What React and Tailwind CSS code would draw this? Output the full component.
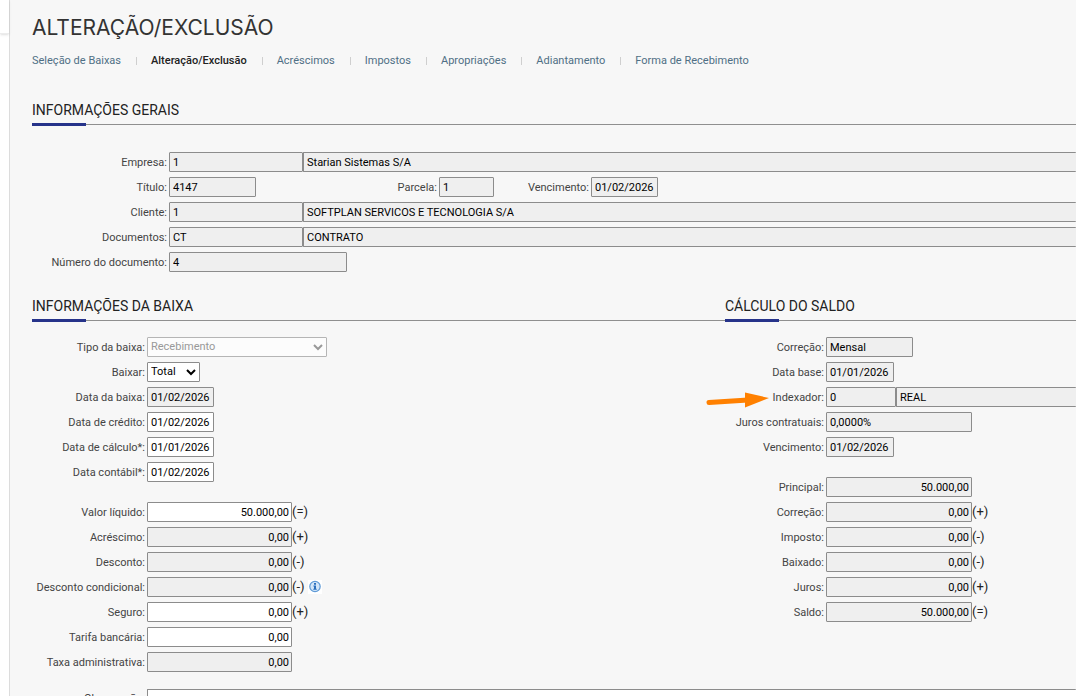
const TABS = [
  "Seleção de Baixas",
  "Alteração/Exclusão",
  "Acréscimos",
  "Impostos",
  "Apropriações",
  "Adiantamento",
  "Forma de Recebimento",
];

function SectionTitle({ children, className = "" }) {
  return (
    <div className={`flex flex-col border-b border-[#8f8f8f] ${className}`}>
      <h2 className="mb-[3px] text-sm leading-5 text-[#222]">{children}</h2>
      <div className="-mb-[2px] h-[3px] w-[54px] bg-[#26338a]" />
    </div>
  );
}

function Label({ htmlFor, className = "", children }) {
  return (
    <label htmlFor={htmlFor} className={`shrink-0 pt-[2px] pr-[2px] text-right text-[11px] text-[#444] ${className}`}>
      {children}:
    </label>
  );
}

function Box({ id, value, className = "", editable = false, numeric = false, label }) {
  return (
    <input
      id={id}
      type="text"
      aria-label={label}
      defaultValue={value}
      readOnly={!editable}
      className={`h-5 rounded-[1px] border border-[#8c8c8c] pl-[3px] text-[11px] text-black outline-none ${
        editable ? "bg-white" : "bg-[#efefef]"
      } ${numeric ? "shrink-0 pr-[2px] text-right" : ""} ${className}`}
    />
  );
}

function Chevron({ className }) {
  return (
    <svg
      viewBox="0 0 10 7"
      className={`pointer-events-none absolute top-[7px] h-[7px] w-[10px] ${className}`}
      fill="none"
      stroke="currentColor"
      strokeWidth="2"
    >
      <path d="M1 1l4 4 4-4" />
    </svg>
  );
}

function InfoIcon() {
  return (
    <svg viewBox="0 0 14 14" className="ml-[3px] size-[14px] bg-white" aria-label="Informação">
      <circle cx="7" cy="6.500" r="5.200" fill="#d3e6f8" stroke="#5f9ad6" strokeWidth="1.200" />
      <path d="M6 3h2v1.700H6zM5.400 5.600H8v3.200h.7v1H5.300v-1H6V6.500h-.6z" fill="#2a6fbd" />
    </svg>
  );
}

function Row({ children }) {
  return <div className="flex h-5 items-center">{children}</div>;
}

function Sign({ children }) {
  return <span className="text-[13px] text-[#222]">{children}</span>;
}

const VALUES = [
  ["liquido", "Valor líquido", "50.000,00", "(=)", true],
  ["acrescimo", "Acréscimo", "0,00", "(+)", false],
  ["desconto", "Desconto", "0,00", "(-)", false],
  ["condicional", "Desconto condicional", "0,00", "(-)", false],
  ["seguro", "Seguro", "0,00", "(+)", true],
  ["tarifa", "Tarifa bancária", "0,00", "", true],
  ["taxa", "Taxa administrativa", "0,00", "", false],
];

const DATES = [
  ["data-baixa", "Data da baixa", "01/02/2026", false],
  ["data-credito", "Data de crédito", "01/02/2026", true],
  ["data-calculo", "Data de cálculo*", "01/01/2026", true],
  ["data-contabil", "Data contábil*", "01/02/2026", true],
];

const BALANCE = [
  ["principal", "Principal", "50.000,00", ""],
  ["correcao-valor", "Correção", "0,00", "(+)"],
  ["imposto", "Imposto", "0,00", "(-)"],
  ["baixado", "Baixado", "0,00", "(-)"],
  ["juros", "Juros", "0,00", "(+)"],
  ["saldo", "Saldo", "50.000,00", "(=)"],
];

export default function App() {
  return (
    <div className="flex h-screen overflow-hidden bg-[#f7f7f7] font-['Roboto',sans-serif]">
      <aside className="w-[10px] shrink-0 border-r border-[#dcdcdc] bg-white">
        <div className="h-[34px] border-b border-[#ececec] shadow-sm" />
      </aside>
      <main className="min-w-0 flex-1 pl-[22px]">
        <h1 className="mt-[14px] font-['Inter',sans-serif] text-[21px] leading-7 text-[#333]">ALTERAÇÃO/EXCLUSÃO</h1>
        <nav className="mt-[11px] flex items-center text-[11px] leading-4">
          {TABS.map((tab, i) => (
            <div key={tab} className="flex items-center">
              {i > 0 && <span className="mr-[14px] ml-[15px] h-2 w-px bg-[#cfcfcf]" />}
              <a href="#" className={i === 1 ? "font-medium text-[#222]" : "text-[#4f6f85]"}>
                {tab}
              </a>
            </div>
          ))}
        </nav>

        <SectionTitle className="mt-[31px]">INFORMAÇÕES GERAIS</SectionTitle>
        <div className="mt-[27px] flex flex-col gap-[5px]">
          <Row>
            <Label htmlFor="empresa" className="w-[137px]">Empresa</Label>
            <Box id="empresa" value="1" className="w-[134px] shrink-0" />
            <Box label="Nome da empresa" value="Starian Sistemas S/A" className="min-w-0 flex-1 border-r-0" />
          </Row>
          <Row>
            <Label htmlFor="titulo" className="w-[137px]">Título</Label>
            <Box id="titulo" value="4147" className="w-[87px]" />
            <Label htmlFor="parcela" className="w-[183px]">Parcela</Label>
            <Box id="parcela" value="1" className="w-[55px]" />
            <Label htmlFor="vencimento-titulo" className="w-[97px]">Vencimento</Label>
            <Box id="vencimento-titulo" value="01/02/2026" className="w-[67px]" />
          </Row>
          <Row>
            <Label htmlFor="cliente" className="w-[137px]">Cliente</Label>
            <Box id="cliente" value="1" className="w-[134px] shrink-0" />
            <Box label="Nome do cliente" value="SOFTPLAN SERVICOS E TECNOLOGIA S/A" className="min-w-0 flex-1 border-r-0" />
          </Row>
          <Row>
            <Label htmlFor="documentos" className="w-[137px]">Documentos</Label>
            <Box id="documentos" value="CT" className="w-[134px] shrink-0" />
            <Box label="Descrição do documento" value="CONTRATO" className="min-w-0 flex-1 border-r-0" />
          </Row>
          <Row>
            <Label htmlFor="numero" className="w-[137px]">Número do documento</Label>
            <Box id="numero" value="4" className="w-[178px]" />
          </Row>
        </div>

        <div className="mt-6 flex">
          <section className="min-w-0 flex-[693_1_0%]">
            <SectionTitle>INFORMAÇÕES DA BAIXA</SectionTitle>
            <div className="mt-4 flex flex-col gap-[5px]">
              <Row>
                <Label htmlFor="tipo" className="w-[115px]">Tipo da baixa</Label>
                <div className="relative text-[#999]">
                  <select
                    id="tipo"
                    disabled
                    className="block h-5 w-[180px] appearance-none rounded-[1px] border border-[#b5b5b5] bg-[#fcfcfc] px-[3px] text-[11px] text-[#999]"
                  >
                    <option>Recebimento</option>
                  </select>
                  <Chevron className="right-1" />
                </div>
              </Row>
              <Row>
                <Label htmlFor="baixar" className="w-[115px]">Baixar</Label>
                <div className="relative text-black">
                  <select
                    id="baixar"
                    className="block h-5 w-[53px] appearance-none rounded-[1px] border border-[#8c8c8c] bg-white px-[3px] text-[11px]"
                  >
                    <option>Total</option>
                    <option>Parcial</option>
                  </select>
                  <Chevron className="right-1" />
                </div>
              </Row>
              {DATES.map(([id, label, value, editable]) => (
                <Row key={id}>
                  <Label htmlFor={id} className="w-[115px]">{label}</Label>
                  <Box id={id} value={value} editable={editable} className="w-[67px]" />
                </Row>
              ))}
            </div>
            <div className="mt-5 flex flex-col gap-[5px]">
              {VALUES.map(([id, label, value, sign, editable]) => (
                <Row key={id}>
                  <Label htmlFor={id} className="w-[115px]">{label}</Label>
                  <Box id={id} value={value} editable={editable} numeric className="w-[145px]" />
                  {sign && <Sign>{sign}</Sign>}
                  {id === "condicional" && <InfoIcon />}
                </Row>
              ))}
            </div>
          </section>

          <section className="min-w-0 flex-[351_1_0%]">
            <SectionTitle>CÁLCULO DO SALDO</SectionTitle>
            <div className="mt-4 flex flex-col gap-[5px]">
              <Row>
                <Label htmlFor="correcao" className="w-[101px]">Correção</Label>
                <Box id="correcao" value="Mensal" className="w-[87px]" />
              </Row>
              <Row>
                <Label htmlFor="data-base" className="w-[101px]">Data base</Label>
                <Box id="data-base" value="01/01/2026" className="w-[68px]" />
              </Row>
              <div className="relative flex h-5 items-center">
                <svg viewBox="0 0 64 16" className="absolute -left-[19px] top-[5px] h-4 w-16" aria-hidden="true">
                  <path d="M3 10.500L42 8" stroke="#ff8000" strokeWidth="5" strokeLinecap="round" />
                  <path d="M39 0.500L63 6L39 15.500z" fill="#ff8000" />
                </svg>
                <Label htmlFor="indexador" className="w-[101px]">Indexador</Label>
                <Box id="indexador" value="0" className="w-[70px] shrink-0" />
                <Box label="Nome do indexador" value="REAL" className="min-w-0 flex-1 border-r-0" />
              </div>
              <Row>
                <Label htmlFor="juros-contratuais" className="w-[101px]">Juros contratuais</Label>
                <Box id="juros-contratuais" value="0,0000%" className="w-[146px]" />
              </Row>
              <Row>
                <Label htmlFor="vencimento" className="w-[101px]">Vencimento</Label>
                <Box id="vencimento" value="01/02/2026" className="w-[68px]" />
              </Row>
            </div>
            <div className="mt-5 flex flex-col gap-[5px]">
              {BALANCE.map(([id, label, value, sign]) => (
                <Row key={id}>
                  <Label htmlFor={id} className="w-[101px]">{label}</Label>
                  <Box id={id} value={value} numeric className="w-[146px]" />
                  {sign && <Sign>{sign}</Sign>}
                </Row>
              ))}
            </div>
          </section>
        </div>

        <div className="mt-[17px] flex">
          <Label htmlFor="observacao" className="w-[115px]">Observação</Label>
          <textarea
            id="observacao"
            className="h-16 min-w-0 flex-1 resize-none rounded-[1px] border border-r-0 border-[#8c8c8c] bg-white px-[3px] text-[11px]"
          />
        </div>
      </main>
    </div>
  );
}
